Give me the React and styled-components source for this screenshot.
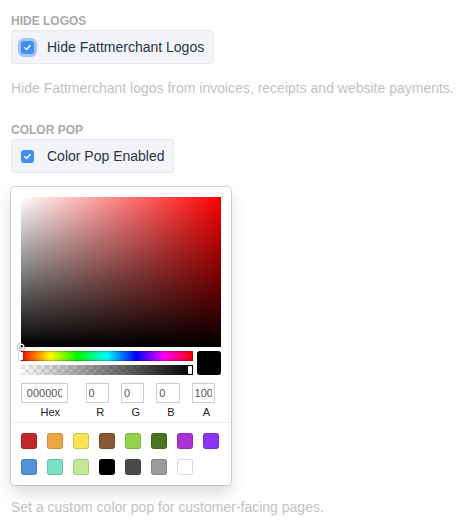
import React from 'react'
import styled, { createGlobalStyle } from 'styled-components'

const GlobalStyle = createGlobalStyle`
  body {
    margin: 0;
    background: #fff;
    font-family: "Liberation Sans", Arial, sans-serif;
  }
`

const Page = styled.div`
  padding: 14px 11px 0;
`

const SectionLabel = styled.div`
  font-size: 12px;
  line-height: 14px;
  font-weight: bold;
  color: #a9a9a9;
  text-transform: uppercase;
  margin-bottom: 2px;
`

const CheckRow = styled.label`
  display: inline-flex;
  align-items: center;
  height: 34px;
  box-sizing: border-box;
  padding: 0 ${p => p.right}px 0 9px;
  background: #f3f4f8;
  border: 1px solid #e7e8ee;
  border-radius: 3px;
  font-size: 14px;
  color: #2d3245;
`

const Box = styled.span`
  width: 13px;
  height: 13px;
  border-radius: 3px;
  background: #3f8ef0;
  display: flex;
  align-items: center;
  justify-content: center;
  margin-right: 13px;
  box-shadow: ${p => (p.focused ? '0 0 0 3px rgba(100, 160, 240, 0.55)' : 'none')};
`

const Desc = styled.p`
  margin: ${p => p.top}px 0 0;
  font-size: 14px;
  line-height: 20px;
  color: #c2c2c2;
`

const Section = styled.div`
  margin-top: ${p => p.top || 0}px;
`

const Picker = styled.div`
  width: 220px;
  box-sizing: border-box;
  padding: 10px 10px 0;
  margin-top: 14px;
  background: #fff;
  border-radius: 4px;
  box-shadow: 0 0 0 1px rgba(0, 0, 0, 0.15), 0 8px 16px rgba(0, 0, 0, 0.15);
`

const Saturation = styled.div`
  position: relative;
  height: 150px;
  background:
    linear-gradient(to top, #000, rgba(0, 0, 0, 0)),
    linear-gradient(to right, #fff, rgba(255, 255, 255, 0)),
    hsl(0, 100%, 50%);
`

const SatPointer = styled.div`
  position: absolute;
  left: 0;
  bottom: 0;
  width: 4px;
  height: 4px;
  border-radius: 50%;
  transform: translate(-2px, 2px);
  box-shadow: 0 0 0 1.5px #fff, inset 0 0 1px 1px rgba(0, 0, 0, 0.3), 0 0 1px 2px rgba(0, 0, 0, 0.4);
`

const Controls = styled.div`
  display: flex;
`

const Sliders = styled.div`
  flex: 1;
  padding: 4px 0;
`

const Hue = styled.div`
  position: relative;
  height: 10px;
  background: linear-gradient(to right, #f00 0%, #ff0 17%, #0f0 33%, #0ff 50%, #00f 67%, #f0f 83%, #f00 100%);
  box-shadow: inset 0 0 0 1px rgba(0, 0, 0, 0.15), inset 0 0 4px rgba(0, 0, 0, 0.25);
`

const Alpha = styled.div`
  position: relative;
  height: 10px;
  margin-top: 4px;
  background:
    linear-gradient(to right, rgba(0, 0, 0, 0), #000),
    repeating-conic-gradient(#fff 0% 25%, #e6e6e6 0% 50%) 0 0 / 8px 8px;
`

const Handle = styled.div`
  position: absolute;
  top: 1px;
  left: ${p => p.left};
  width: 4px;
  height: 8px;
  border-radius: 1px;
  background: #fff;
  box-shadow: 0 0 2px rgba(0, 0, 0, 0.6);
`

const Current = styled.div`
  width: 24px;
  height: 24px;
  margin: 4px 0 0 4px;
  border-radius: 3px;
  background: #000;
  box-shadow: inset 0 0 0 1px rgba(0, 0, 0, 0.15), inset 0 0 4px rgba(0, 0, 0, 0.25);
`

const Fields = styled.div`
  display: flex;
  padding-top: 4px;
`

const Field = styled.div`
  flex: ${p => (p.wide ? 2 : 1)};
  padding-left: ${p => (p.wide ? 0 : 6)}px;
  min-width: 0;
`

const Input = styled.div`
  width: 80%;
  box-sizing: border-box;
  padding: 4px 10% 3px;
  font-size: 11px;
  line-height: 13px;
  color: #555;
  background: #fff;
  box-shadow: inset 0 0 0 1px #ccc;
`

const InputText = styled.span`
  display: block;
  white-space: nowrap;
  overflow: hidden;
`

const FieldLabel = styled.span`
  display: block;
  text-align: center;
  font-size: 11px;
  line-height: 12px;
  color: #222;
  padding: 3px 0 4px;
`

const Presets = styled.div`
  display: flex;
  flex-wrap: wrap;
  margin: 0 -10px;
  padding: 10px 0 0 10px;
  border-top: 1px solid #eee;
`

const Swatch = styled.div`
  width: 16px;
  height: 16px;
  margin: 0 10px 10px 0;
  border-radius: 3px;
  background: ${p => p.color};
  box-shadow: inset 0 0 0 1px rgba(0, 0, 0, 0.15);
`

const presetColors = [
  '#c1272a', '#eea643', '#f8e551', '#875a34', '#94d24b', '#4c7421', '#ab33d6', '#8a36f7',
  '#5592de', '#7be0c5', '#c5e894', '#000000', '#4a4a4a', '#9b9b9b', '#ffffff',
]

const fields = [
  { label: 'Hex', value: '000000', wide: true },
  { label: 'R', value: '0' },
  { label: 'G', value: '0' },
  { label: 'B', value: '0' },
  { label: 'A', value: '100' },
]

const Check = ({ focused }) => (
  <Box focused={focused}>
    <svg width="9" height="9" viewBox="0 0 9 9">
      <path d="M1.8 4.7 L3.6 6.4 L7.2 2.6" fill="none" stroke="#fff" strokeWidth="1.4" strokeLinecap="round" strokeLinejoin="round" />
    </svg>
  </Box>
)

export default function App() {
  return (
    <Page>
      <GlobalStyle />
      <Section>
        <SectionLabel>Hide Logos</SectionLabel>
        <CheckRow right={9}>
          <Check focused />
          Hide Fattmerchant Logos
        </CheckRow>
        <Desc top={14}>Hide Fattmerchant logos from invoices, receipts and website payments.</Desc>
      </Section>
      <Section top={25}>
        <SectionLabel>Color Pop</SectionLabel>
        <CheckRow right={8}>
          <Check />
          Color Pop Enabled
        </CheckRow>
        <Picker>
          <Saturation>
            <SatPointer />
          </Saturation>
          <Controls>
            <Sliders>
              <Hue>
                <Handle left="-2px" />
              </Hue>
              <Alpha>
                <Handle left="calc(100% - 5px)" />
              </Alpha>
            </Sliders>
            <Current />
          </Controls>
          <Fields>
            {fields.map(f => (
              <Field key={f.label} wide={f.wide}>
                <Input>
                  <InputText>{f.value}</InputText>
                </Input>
                <FieldLabel>{f.label}</FieldLabel>
              </Field>
            ))}
          </Fields>
          <Presets>
            {presetColors.map(c => (
              <Swatch key={c} color={c} />
            ))}
          </Presets>
        </Picker>
        <Desc top={12}>Set a custom color pop for customer-facing pages.</Desc>
      </Section>
    </Page>
  )
}
